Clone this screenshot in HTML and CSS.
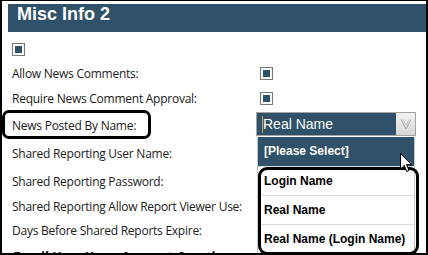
FILE: index.html
```html
<!DOCTYPE html>
<html>
<head>
    <title>Misc Info 2</title>
    <link rel="stylesheet" href="styles.css">
</head>
<body>
    <div class="frame">
        <div class="panel-title">Misc Info 2</div>

        <div class="settings">
            <div class="row row-top">
                <span class="check"></span>
            </div>
            <div class="row row-short">
                <label>Allow News Comments:</label>
                <div class="value"><span class="check"></span></div>
            </div>
            <div class="row row-approval">
                <label>Require News Comment Approval:</label>
                <div class="value"><span class="check"></span></div>
            </div>
            <div class="row row-select">
                <label>News Posted By Name:</label>
                <div class="value">
                    <div class="select">
                        <span class="caret"></span>
                        <span class="select-text">Real Name</span>
                        <span class="select-btn">
                            <svg width="12" height="12" viewBox="0 0 12 12">
                                <path d="M1 1.5 L6 11 L11 1.5" fill="none" stroke="#a9a9a9" stroke-width="1"/>
                                <path d="M3 1.5 L6 7.5 L9 1.5" fill="none" stroke="#c4c4c4" stroke-width="1"/>
                            </svg>
                        </span>
                        <ul class="options">
                            <li class="selected">[Please Select]</li>
                            <li>Login Name</li>
                            <li>Real Name</li>
                            <li>Real Name (Login Name)</li>
                        </ul>
                    </div>
                </div>
            </div>
            <div class="row row-tall">
                <label>Shared Reporting User Name:</label>
            </div>
            <div class="row row-pass">
                <label>Shared Reporting Password:</label>
            </div>
            <div class="row">
                <label>Shared Reporting Allow Report Viewer Use:</label>
            </div>
            <div class="row">
                <label>Days Before Shared Reports Expire:</label>
            </div>
            <h3 class="sub-head">Email User Upon Account Creation</h3>
        </div>

        <!-- annotations drawn over the screenshot -->
        <div class="mark mark-label"></div>
        <div class="mark mark-options"></div>
        <svg class="pointer" width="13" height="20" viewBox="0 0 13 20">
            <path d="M0.5 0.5 L0.5 16 L4.2 12.4 L6.8 18.5 L9 17.5 L6.5 11.6 L11.5 11.6 Z" fill="#fff" stroke="#000" stroke-width="1"/>
        </svg>
    </div>
</body>
</html>
```

FILE: styles.css
```css
body { margin: 0; background: #fff; }
.frame { position: relative; width: 428px; height: 255px; box-sizing: border-box; border: 2px solid #000; border-top-width: 1px; padding: 3px 0 0 6px; overflow: hidden; }
.panel-title { height: 28px; line-height: 28px; background: #2f5169; color: #fff; font: bold 18px "Liberation Sans", Arial, sans-serif; padding-left: 9px; }

.settings { padding: 6px 0 0 4px; font-family: "Open Sans", "Noto Sans", sans-serif; font-size: 12px; letter-spacing: -0.25px; color: #1a1a1a; }
.row { display: grid; grid-template-columns: 244px 1fr; align-items: center; height: 24px; }
.row-top { display: flex; height: 23px; }
.row-short { height: 23px; }
.row-approval { height: 26px; }
.row-select { height: 28px; }
.row-tall { height: 29px; }
.row-pass { height: 26px; }
.row label { padding-top: 2px; }

.check { display: inline-block; width: 13px; height: 13px; box-sizing: border-box; border: 1.5px solid #777; padding: 2px; background: #2f5169; background-clip: content-box; vertical-align: middle; }
.value .check { margin-left: 4px; }

.select { position: relative; width: 160px; height: 24px; box-sizing: border-box; border: 1px solid #a3a3a3; background: #2f5169; color: #fff; font: 14px "Liberation Sans", Arial, sans-serif; line-height: 22px; letter-spacing: 0; }
.select-text { padding-left: 6px; }
.caret { position: absolute; left: 5px; top: 3px; width: 1px; height: 17px; background: #d8a640; }
.select-btn { position: absolute; right: 0; top: 0; width: 19px; height: 22px; background: linear-gradient(#f2f2f2, #d6d6d6); display: flex; align-items: center; justify-content: center; }

.options { position: absolute; left: 0; top: 24px; width: 158px; margin: 0; padding: 0; list-style: none; background: #fff; border-left: 1px solid #c8c8c8; border-right: 1px solid #c8c8c8; box-sizing: border-box; font: bold 12px "Liberation Sans", Arial, sans-serif; color: #000; }
.options li { height: 29px; line-height: 29px; padding-left: 6px; border-top: 1px solid #dcdcdc; box-sizing: border-box; }
.options li.selected { background: #2f5169; color: #fff; border-top: 0; }

.sub-head { margin: 0; padding-top: 6px; font: bold italic 14px "Open Sans", sans-serif; color: #1a1a1a; }

.mark { position: absolute; border: 3px solid #000; border-radius: 7px; box-sizing: border-box; }
.mark-label { left: 0; top: 109px; width: 149px; height: 29px; }
.mark-options { left: 256px; top: 166px; width: 161px; height: 88px; border-radius: 9px; }
.pointer { position: absolute; left: 398px; top: 152px; }
```
